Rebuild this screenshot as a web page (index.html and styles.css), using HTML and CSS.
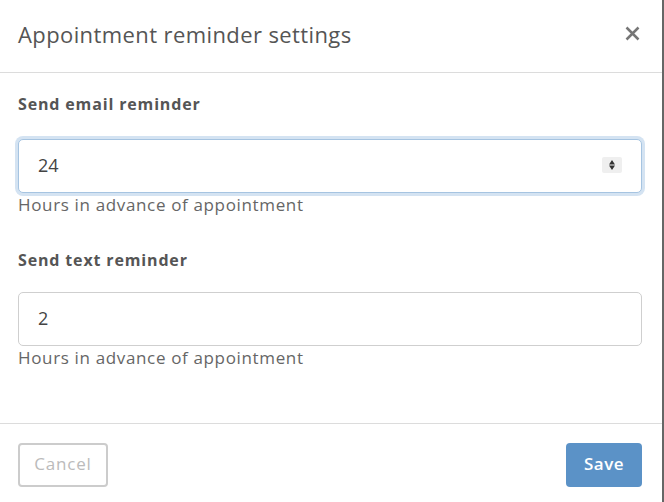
FILE: index.html
```html
<!DOCTYPE html>
<html>
<head>
<meta charset="utf-8">
<link rel="stylesheet" href="styles.css">
</head>
<body>
<div class="modal">
  <div class="modal-header">
    <h1 class="title">Appointment reminder settings</h1>
    <button class="close" aria-label="Close">
      <svg width="15" height="15" viewBox="0 0 15 15"><path d="M1.5 1.5 L13.5 13.5 M13.5 1.5 L1.5 13.5" stroke="#777" stroke-width="2.5" stroke-linecap="butt"/></svg>
    </button>
  </div>
  <div class="modal-body">
    <div class="field">
      <div class="label">Send email reminder</div>
      <div class="input focused">
        <span class="value">24</span>
        <span class="spinner">
          <svg width="6" height="10" viewBox="0 0 6 10"><path d="M3 0 L6 4.5 L0 4.5 Z M0 5.5 L6 5.5 L3 10 Z" fill="#333"/></svg>
        </span>
      </div>
      <div class="help">Hours in advance of appointment</div>
    </div>
    <div class="field second">
      <div class="label">Send text reminder</div>
      <div class="input">
        <span class="value">2</span>
      </div>
      <div class="help">Hours in advance of appointment</div>
    </div>
  </div>
  <div class="modal-footer">
    <button class="btn btn-cancel">Cancel</button>
    <button class="btn btn-save">Save</button>
  </div>
</div>
</body>
</html>
```

FILE: styles.css
```css
html, body {
  margin: 0;
  padding: 0;
  background: #fff;
}
body {
  font-family: "Open Sans", "Liberation Sans", sans-serif;
  width: 664px;
  height: 502px;
  overflow: hidden;
}
.modal {
  width: 662px;
  height: 502px;
  border-right: 2px solid #666;
  display: flex;
  flex-direction: column;
  background: #fff;
}
.modal-header {
  height: 72px;
  border-bottom: 1px solid #dcdcdc;
  display: flex;
  align-items: center;
  justify-content: space-between;
  padding: 0 22px 0 18px;
  flex: none;
}
.title {
  margin: 0;
  font-size: 22px;
  line-height: 30px;
  font-weight: 400;
  color: #555;
  letter-spacing: 0.4px;
  position: relative;
  top: -2px;
}
.close {
  border: 0;
  background: none;
  padding: 0;
  width: 15px;
  height: 15px;
  display: flex;
  position: relative;
  top: -3px;
}
.modal-body {
  flex: 1;
  padding: 21px 20px 0 18px;
}
.field {
  display: flex;
  flex-direction: column;
}
.field.second {
  margin-top: 33px;
}
.label {
  font-size: 16px;
  line-height: 20px;
  font-weight: 700;
  color: #555;
  letter-spacing: 0.85px;
  margin-bottom: 25px;
}
.field.second .label {
  margin-bottom: 22px;
}
.input {
  height: 54px;
  box-sizing: border-box;
  border: 1px solid #cfcfcf;
  border-radius: 5px;
  display: flex;
  align-items: center;
  justify-content: space-between;
  padding: 0 19px 3px 19px;
  font-size: 18px;
  color: #444;
  background: #fff;
}
.input.focused {
  border-color: #a6c4e1;
  box-shadow: 0 0 0 3px #d4e3f2;
}
.spinner {
  width: 20px;
  height: 16px;
  background: #efefef;
  border-radius: 2px;
  display: flex;
  align-items: center;
  justify-content: center;
}
.help {
  font-size: 17px;
  line-height: 24px;
  letter-spacing: 0.65px;
  color: #666;
}
.modal-footer {
  height: 79px;
  flex: none;
  border-top: 1px solid #dcdcdc;
  display: flex;
  justify-content: space-between;
  align-items: flex-start;
  padding: 19px 20px 0 18px;
  box-sizing: border-box;
}
.btn {
  font-family: "Open Sans", "Liberation Sans", sans-serif;
  height: 44px;
  border-radius: 4px;
  font-size: 17px;
  padding: 0 0 4px 0;
  cursor: pointer;
}
.btn-cancel {
  width: 90px;
  background: #fff;
  border: 2px solid #cccccc;
  color: #bbb;
  letter-spacing: 0.8px;
}
.btn-save {
  width: 76px;
  background: #5b92c7;
  border: 0;
  color: #fff;
  font-weight: 600;
  letter-spacing: 0.5px;
}
```
